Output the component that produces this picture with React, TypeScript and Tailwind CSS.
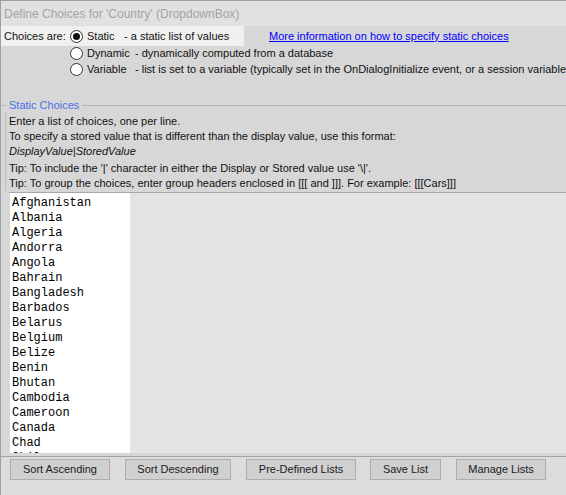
const countries = [
  "Afghanistan",
  "Albania",
  "Algeria",
  "Andorra",
  "Angola",
  "Bahrain",
  "Bangladesh",
  "Barbados",
  "Belarus",
  "Belgium",
  "Belize",
  "Benin",
  "Bhutan",
  "Cambodia",
  "Cameroon",
  "Canada",
  "Chad",
  "Chile",
];

function Radio({ checked }: { checked?: boolean }) {
  return (
    <span className="w-[13px] h-[13px] rounded-full border border-[#333] bg-white flex items-center justify-center shrink-0">
      {checked && <span className="w-[7px] h-[7px] rounded-full bg-[#111]" />}
    </span>
  );
}

function Btn({ label, w }: { label: string; w: string }) {
  return (
    <button
      className={`${w} h-[21px] bg-[#d0d0d0] border border-[#adadad] text-[#1a1a1a] text-[11px] flex items-center justify-center shrink-0`}
    >
      {label}
    </button>
  );
}

export default function App() {
  return (
    <div className="w-[566px] h-[495px] overflow-hidden bg-[#d7d7d7] border-t border-l border-[#a0a0a0] flex flex-col font-['Liberation_Sans',sans-serif] text-[11px] text-[#111]">
      {/* title */}
      <div className="h-[25px] bg-[#e1e1e1] pl-[3px] flex items-center text-[12px] text-[#a3a3a3] shrink-0">
        Define Choices for 'Country' (DropdownBox)
      </div>

      {/* choice type */}
      <div className="h-[20px] flex items-center shrink-0">
        <div className="w-[243px] h-full bg-[#f0f0f0] flex items-center pl-[3px]">
          <span className="w-[66px] shrink-0">Choices are:</span>
          <Radio checked />
          <span className="ml-[4px] w-[37px] shrink-0">Static</span>
          <span>- a static list of values</span>
        </div>
        <a className="ml-[25px] text-[#0000ff] underline underline-offset-1">
          More information on how to specify static choices
        </a>
      </div>
      <div className="h-[15px] flex items-center pl-[69px] shrink-0">
        <Radio />
        <span className="ml-[4px] w-[48px] shrink-0">Dynamic</span>
        <span>- dynamically computed from a database</span>
      </div>
      <div className="h-[17px] flex items-center pl-[69px] shrink-0 whitespace-nowrap">
        <Radio />
        <span className="ml-[4px] w-[48px] shrink-0">Variable</span>
        <span className="shrink-0">
          - list is set to a variable (typically set in the OnDialogInitialize event, or a session variable,
        </span>
      </div>

      {/* static choices group */}
      <div className="mt-[20px] h-[14px] flex items-center shrink-0">
        <span className="w-[5px] h-px bg-[#b9b9b9]" />
        <span className="px-[3px] text-[#4a6ee6]">Static Choices</span>
        <span className="flex-1 h-px bg-[#b3b3b3]" />
      </div>
      <div className="ml-[4px] border-l border-[#bdbdbd] pl-[3px] pt-[2px] flex flex-col shrink-0">
        <div className="h-[15px] flex items-center">Enter a list of choices, one per line.</div>
        <div className="h-[15px] flex items-center">
          To specify a stored value that is different than the display value, use this format:
        </div>
        <div className="h-[15px] flex items-center italic">DisplayValue|StoredValue</div>
        <div className="h-[17px] flex items-end">
          Tip: To include the '|' character in either the Display or Stored value use '\|'.
        </div>
        <div className="h-[15px] flex items-center">
          Tip: To group the choices, enter group headers enclosed in [[[ and ]]]. For example: [[[Cars]]]
        </div>
      </div>
      <div className="mt-[1px] ml-[8px] h-px bg-[#a8a8a8] shrink-0" />

      {/* list */}
      <div className="h-[260px] flex shrink-0 pl-[9px]">
        <div className="w-[120px] bg-white overflow-hidden pl-[2px] pt-[3px] font-['Liberation_Mono',monospace] text-[12px] leading-[15px] text-black">
          {countries.map((c) => (
            <div key={c}>{c}</div>
          ))}
        </div>
        <div className="flex-1 bg-[#e3e3e3]" />
      </div>

      {/* buttons */}
      <div className="mt-[3px] h-px bg-[#a3a3a3] shrink-0" />
      <div className="flex-1 bg-[#dcdcdc] pt-[2px] pl-[9px] flex items-start">
        <Btn label="Sort Ascending" w="w-[100px]" />
        <div className="w-[15px]" />
        <Btn label="Sort Descending" w="w-[106px]" />
        <div className="w-[15px]" />
        <Btn label="Pre-Defined Lists" w="w-[110px]" />
        <div className="w-[14px]" />
        <Btn label="Save List" w="w-[71px]" />
        <div className="w-[15px]" />
        <Btn label="Manage Lists" w="w-[90px]" />
      </div>
    </div>
  );
}
